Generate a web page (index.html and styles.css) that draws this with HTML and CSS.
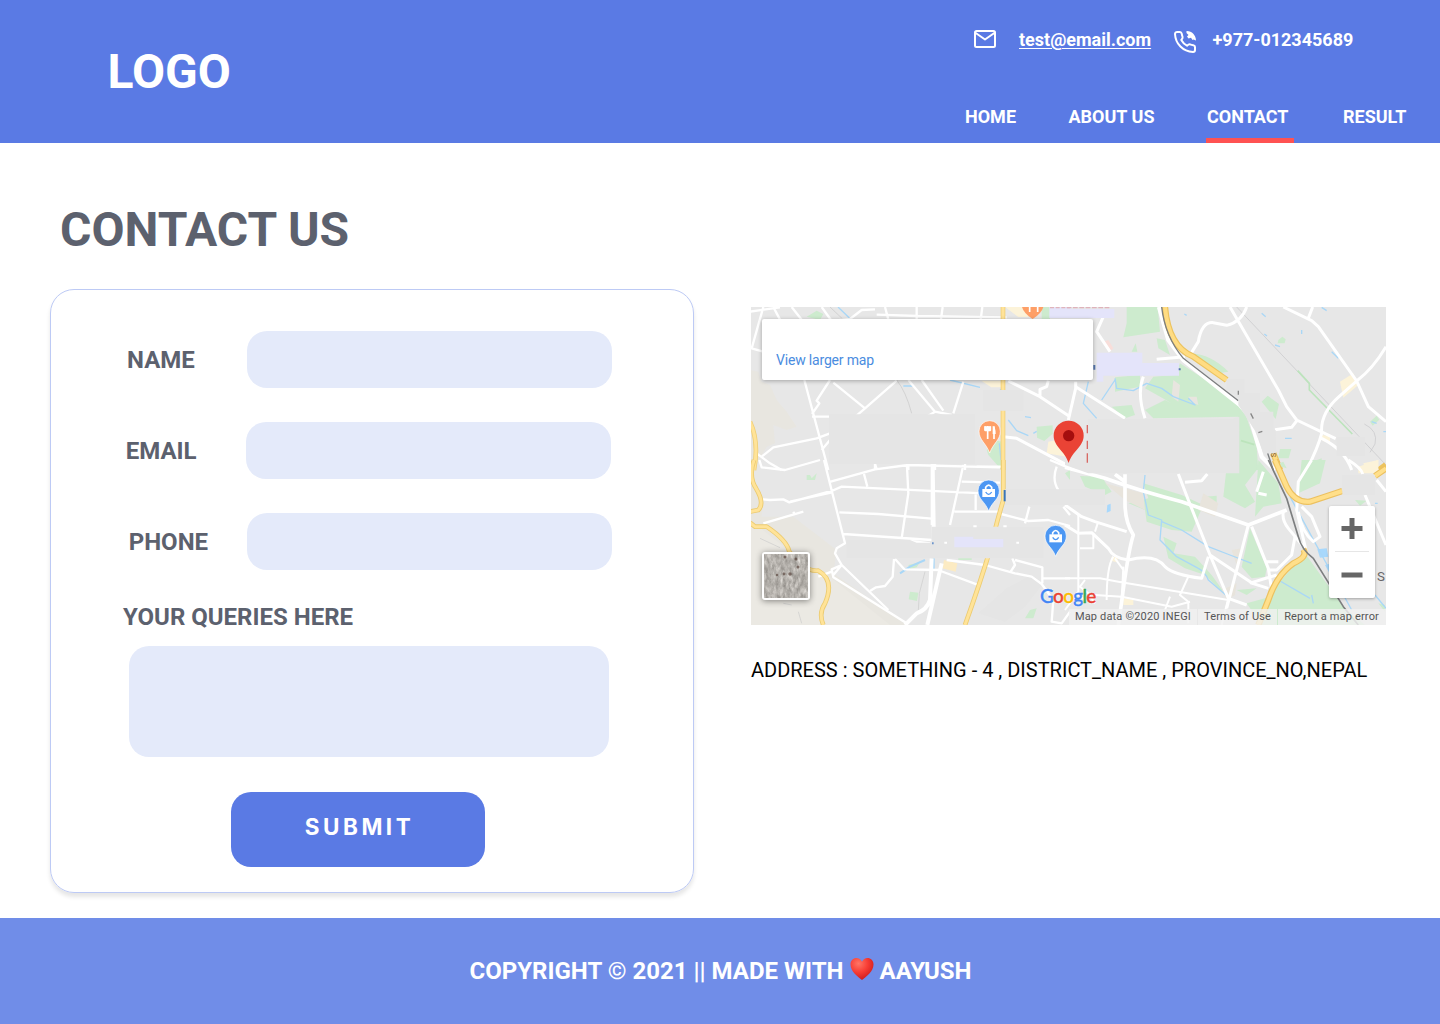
FILE: index.html
```html
<!DOCTYPE html>
<html lang="en">
<head>
<meta charset="utf-8">
<title>Contact Us</title>
<link rel="stylesheet" href="styles.css">
</head>
<body>
<header class="header">
  <div class="logo">LOGO</div>
  <div class="header-side">
    <div class="contact-bar">
      <svg class="mail-icon" width="24" height="20" viewBox="0 0 24 20" fill="none" stroke="#fff" stroke-width="2" stroke-linejoin="round"><rect x="2" y="2" width="20" height="16" rx="1.5"/><path d="M2 3.5l10 7 10-7"/></svg>
      <a class="mail" href="mailto:test@email.com">test@email.com</a>
      <svg class="phone-icon" width="24" height="24" viewBox="0 0 24 24"><path d="M2 4C2 2.700 3 2 4.200 2H7C8 2 8.500 2.700 8.700 3.700C8.900 5 9.200 6 9.600 7C9.900 8 9.600 8.500 8.300 10C9.600 12.400 11.600 14.400 14 15.700C15.500 14.400 16 14.100 17 14.400C18 14.800 19 15.100 20.300 15.300C21.300 15.500 22 16 22 17V20C22 21.300 21.300 22 20 22C10 21.500 2.500 14 2 4Z" fill="none" stroke="#fff" stroke-width="2" stroke-linejoin="round"/><path d="M13.500 1C18.500.700 23 5 23 10.500L20.500 9.500L19.500 10L18 7.800L15.500 8.500L14 6.500L15.500 5L13.500 3Z" fill="#fff"/></svg>
      <span>+977-012345689</span>
    </div>
    <nav class="nav">
      <a href="#">HOME</a>
      <a href="#">ABOUT US</a>
      <a href="#" class="active">CONTACT</a>
      <a href="#">RESULT</a>
    </nav>
  </div>
</header>

<main class="main">
  <h1 class="title">CONTACT US</h1>
  <div class="columns">
    <form class="card">
      <div class="field"><label class="label-name" for="name">NAME</label><input id="name" type="text"></div>
      <div class="field field-email"><label class="label-email" for="email">EMAIL</label><input id="email" type="email"></div>
      <div class="field"><label class="label-phone" for="phone">PHONE</label><input id="phone" type="tel"></div>
      <label class="label-query" for="query">YOUR QUERIES HERE</label>
      <textarea id="query"></textarea>
      <button type="button">SUBMIT</button>
    </form>

    <section class="location">
      <div class="map">
        <svg class="map-art" viewBox="0 0 1905 954" fill="none" stroke-linejoin="round">
          <rect width="1905" height="954" fill="#e7e7e7"/>
          <!-- north-west -->
          <g transform="translate(-3 -21)">
            <path d="M0 210L25 215 35 245 60 255 80 300 110 335 140 380 110 390 70 375 75 430 50 440 0 530Z" fill="#e8e6e0"/>
            <path d="M170 50L200 32 220 42 210 60ZM875 21h25v36h-25ZM860 380l48-4v25l-25 22-22-10ZM710 450l25-30 20 5v85l-40-45Z" fill="#cdebce"/>
            <path d="M765 21h70v30h-30ZM694 242h70v20h-40ZM895 425l25-5 30 50-60-10Z" fill="#fcf3d9"/>
            <path d="M264 21l35 34M600 240l90 22M460 258h28M745 275l10-8M775 360l25 32 35 15M825 350l18 3M748 430l5 50M850 400l10-6" stroke="#a9d7f7" stroke-width="4"/>
            <path d="M240 21l38 36M440 240q28 35 45 100" stroke="#c7c7c7" stroke-width="2"/>
            <g stroke="#fff" stroke-width="7">
              <path d="M40 21L5 145 40 155M0 35L90 22M70 21l20 38M125 21l30 38M215 21l30 42L300 57 335 30 375 28M405 21l10 38M500 21v36M500 48L770 52M578 21l-5 36M697 21l-5 38M380 44l120 4"/>
              <path d="M163 240L235 510M240 240l-40 62 8 8-22 32M250 248L345 325 440 242M345 325l-35 30M186 350H240M215 450l35-42M20 460L60 490 95 510M35 470L70 442 200 415 240 400"/>
              <path d="M475 240L555 335 605 345M515 240l65 92M640 245L610 340M555 335l-30 18M375 490v20M475 490v20M555 490v20M645 490v20M680 500h75"/>
              <path d="M775 243L870 290 960 350M870 290V268L890 260 895 242M760 410L800 415 960 500" stroke-width="9"/>
            </g>
            <path d="M759 21V510M0 365Q28 425 12 510" stroke="#f0cf78" stroke-width="14"/><path d="M759 21V510M0 365Q28 425 12 510" stroke="#ffe398" stroke-width="9"/>
            <path d="M237 343H675V490H237ZM700 270H820V332H700Z" fill="#e5e5e5"/>
            <path d="M898 21h65v33h-65Z" fill="#e4e4fa"/><path d="M900 22h60" stroke="#e0b4bc" stroke-width="5" stroke-dasharray="12 5"/>
          </g>
          <!-- north-east -->
          <g transform="translate(942 -21)">
            <path d="M185 21H278L285 95 175 112 185 70ZM200 155l12-25 5 25ZM275 115l25 5 15 45-35-20ZM380 160Q440 165 490 215L460 220ZM150 232L225 225 225 260 150 275ZM265 230L330 225 345 190 530 310 575 440 580 510H520V350L265 355 240 330 300 300 320 310 240 265ZM590 305l18-18 34 25-10 45ZM640 120l12-10 10 8-3 12H638ZM140 320l60-5 10 30-30 10ZM915 365l20-18 8 12-20 18ZM645 447h34l-8 28h-32ZM730 490l40-15v35h-50ZM0 225h20v15H0Z" fill="#cdebce"/>
            <path d="M825 245l40-25 15 35-45 38ZM770 405l25 3v20l-22-5ZM895 490l45-10v30h-40Z" fill="#fcf3d9"/><path d="M115 125l15-5 15 25-10 10Z" fill="#f8deda"/><path d="M325 240l20 15-5 50-20-15M370 290h25l5 25-25-10Z" fill="#e8e5df"/>
            <path d="M150 235L155 265 205 272 245 250 290 265 325 290 390 315 370 295M150 240L110 300M70 245L55 310 95 355M358 42l7 4M590 40l12 10M598 102l8 6M710 90v12M630 135l15 5M800 155l20 20M660 415h20M770 22l15 10M920 365l15 5M955 395h8" stroke="#a9d7f7" stroke-width="4"/>
            <path d="M515 21L963 495M898 372q42 20 32 60l-15 25" stroke="#c6c6c8" stroke-width="2"/><path d="M698 212L733 250V270L862 402M528 422l40 12" stroke="#bce4bc" stroke-width="5"/>
            <g stroke="#fff" stroke-width="9">
              <path d="M282 21L310 120 355 180 525 315 555 350 590 470 630 510" stroke-width="13"/>
              <path d="M380 157L400 125Q410 65 445 68L485 76Q530 65 545 21M495 21L640 270 665 320 695 360 812 416M630 389L680 382 697 360M655 21L740 62 760 80 875 243 910 320 963 365M743 21L730 55M963 140Q925 205 875 243L822 290Q765 340 770 400 760 440 725 510M770 415Q840 450 860 510M275 178L360 170M115 50L95 95 135 155M32 245V265L10 360M32 260L180 355M235 230Q215 280 240 355M0 492L25 510"/>
            </g>
            <path d="M300 21Q310 140 385 170L485 240M625 460L645 510M963 495l-20 15" stroke="#ecc35f" stroke-width="19"/><path d="M300 21Q310 140 385 170L485 240M625 460L645 510" stroke="#ffdc82" stroke-width="12"/>
            <path d="M290 21Q300 110 355 175L520 302M608 460L625 510" stroke="#7c7e7f" stroke-width="4"/>
            <path d="M70 357H500L523 350V510H70ZM485 236H538V280H585V335H625V390H632V460H595L570 392 520 315V290L485 270ZM815 410h85v58h-85Z" fill="#e5e5e5"/>
            <path d="M0 27H148V54H0ZM95 158H232V189H342V227H115V245H95Z" fill="#e4e4fa"/>
            <path d="M5 22h130" stroke="#dfb2bb" stroke-width="5" stroke-dasharray="14 5"/><path d="M88 195v14M344 205v6" stroke="#5675ad" stroke-width="6"/><path d="M67 375v25M67 422v25M67 460v28" stroke="#d76964" stroke-width="4"/><path d="M557 340l8 16M580 398l12-4M520 272v12" stroke="#888" stroke-width="4"/>
            <text x="617" y="472" transform="rotate(-90 625 464)" font-family="Roboto" font-size="23" fill="#755533">S</text>
          </g>
          <!-- south-west -->
          <g transform="translate(-3 459)">
            <path d="M0 40L40 115 35 170 130 170 260 270 250 340 470 495H0Z" fill="#e8e6e0"/>
            <path d="M120 275L145 300 245 355 420 495H0V180Z" fill="#ebe9e3"/>
            <path d="M170 45h10l5 10 15-15-5 20H170ZM480 395l25 3-4 25-25-5ZM475 315l35-8-10 15-20 5ZM825 475l15-25 20-5-10 30ZM625 290h40v10h-40ZM945 40l15-10v30Z" fill="#cdebce"/><path d="M582 300l40 10-5 25-40-10Z" fill="#fcebc3"/><path d="M770 385l75-40 35 25-55 70-60 45-80-25Z" fill="#e5e5e5"/>
            <path d="M450 340L480 320 525 300M551 295v33" stroke="#a9d7f7" stroke-width="6"/><path d="M525 335L508 400 505 450M30 235l60 28M100 430l25 5M145 455l10 35" stroke="#ccc" stroke-width="2"/>
            <g stroke="#fff" stroke-width="7">
              <path d="M222 0L285 250 260 265 255 280 275 315 415 450M28 0L35 22 105 30 210 0M38 118L60 120 100 118 118 127 245 93 275 80 700 100M40 190L160 155M130 155l5 10M120 125L243 98M242 65L375 28 475 15 750 22M375 12l5 15M342 42l10 38M470 0L475 100 455 235M268 157L385 162 545 176M280 222L545 240M640 15L600 195M635 65L750 68M677 100v50M613 155H750M480 243L540 250M550 240v10"/>
              <path d="M548 0V195M548 20L552 260M545 295L540 420Q530 450 500 460L465 495M575 310L532 495" stroke-width="12"/>
              <path d="M275 315L245 328 250 352 470 490M275 315L250 345M432 297L428 350 405 378 378 382 360 393M435 297L463 328 572 330M572 333L688 376M590 300L705 315 795 340 845 350 875 372 910 420 905 485 935 490 960 455M787 295L795 315 782 335M795 300L877 322V370M877 355H960M205 350l40-15" />
              <path d="M753 162L835 183 895 180 960 198M838 140L825 190M920 20Q905 60 925 90M900 0l60 25M940 140l20 25"/>
            </g>
            <path d="M760 0V120Q745 170 735 210L720 270Q690 370 645 495M12 0Q-5 50 18 85 45 130 25 150L0 155M0 188L15 200H50Q110 240 118 275L145 310Q180 335 205 332 255 360 225 430 205 460 220 495" stroke="#eccb70" stroke-width="14"/><path d="M760 0V120Q745 170 735 210L720 270Q690 370 645 495M12 0Q-5 50 18 85 45 130 25 150L0 155M0 188L15 200H50Q110 240 118 275L145 310Q180 335 205 332 255 360 225 430 205 460 220 495" stroke="#ffe398" stroke-width="9"/>
            <path d="M237 0H675V12H237ZM290 240L480 240 500 248H545V200H880V295H290ZM765 88H1065V135H765Z" fill="#e5e5e5"/><path d="M613 230H670V237H760V262H613Z" fill="#e4e4fa"/><path d="M764 90v34" stroke="#3975b8" stroke-width="6"/><path d="M546 250h5" stroke="#6c95cc" stroke-width="6"/><path d="M583 248h8M799 248h8M670 199h10M760 199h10" stroke="#fff" stroke-width="6"/>
          </g>
          <!-- south-east -->
          <g transform="translate(942 459)">
            <path d="M45 48L110 50 140 95 120 105 60 80ZM235 70L350 105 415 135 380 215 320 210 245 185 240 150 190 130 250 115ZM485 20L510 0H575V30L540 75 570 125 540 145 475 110ZM580 0L640 70 650 130 595 140 570 170ZM710 0H782L765 70 700 100ZM420 110l35-3v25l-25 12ZM555 205L605 325 600 350 560 355 530 320ZM295 230l40 20-10 30 65 10 50 55 50 70-70-70-60-20-50-30ZM545 430L600 415 720 280 835 440 900 495H590ZM515 390l60-5-30 20ZM630 15l25-10 10 20ZM870 120l35 2-20 15ZM940 430l20 5v20Z" fill="#cdebce"/>
            <path d="M120 70L235 100 240 150 180 120ZM415 100L460 130 450 170 400 150ZM500 270l30-5-15 50ZM470 390l45-20-5 35-25 15Z" fill="#e8e4dc"/>
            <path d="M140 290l20 2-5 15-17-5ZM175 415l30 5v15h-30ZM880 20L940 0V40H880Z" fill="#fcf3d9"/><path d="M757 268l28-3 5 25-25 3ZM780 315l12-3v25ZM127 135l10-4v22l-12 5Z" fill="#a8d8fc"/>
            <path d="M240 45L235 95 250 165 290 180 285 240 335 290 400 325Q420 335 430 360L500 420M290 185L350 210 430 260 495 285 560 310M640 360l95 55M740 405l5 25M930 130h8M675 110L860 450M930 405l33 40" stroke="#a9d7f7" stroke-width="4"/>
            <g stroke="#fff" stroke-width="9">
              <path d="M0 22L120 55Q230 95 350 125L550 195 665 150M150 43L180 65M180 43V130Q180 185 205 225 190 270 170 425L160 495" stroke-width="11"/>
              <path d="M340 42L370 120 435 285 490 415 545 435M360 67L410 62 427 42M0 135L50 170 90 185 185 215M0 195L40 220 80 218 130 265Q145 295 190 300 270 280 300 320 325 345 410 355L430 290M435 285L560 368 635 345M550 195L485 445M560 200L610 325 620 390M555 368L610 385M610 330H635L680 285 690 230M605 305h35" />
              <path d="M40 165V395L0 450M45 265H85V220M90 215L98 190M0 355H105L160 365 490 420M145 290Q125 320 125 420M150 295L175 330M175 320L170 425M370 350L345 405 370 425V490M60 360L45 380 70 400L90 430M90 405L170 410 320 440 375 425M315 410L300 450M35 400L60 420M490 415L470 495" stroke-width="6"/>
              <path d="M740 0L700 65 695 150 725 280M655 155Q650 180 670 205L715 260M700 155Q710 215 745 245L765 230 740 170 710 140M850 0Q890 25 893 42M900 105L963 255M935 60L963 95M580 100L605 105M595 35L575 95"/>
            </g>
            <path d="M630 0L665 80Q690 130 735 125L832 93M715 268Q730 290 685 310 635 345 610 420L580 495M930 48L963 25" stroke="#ecc160" stroke-width="19"/><path d="M630 0L665 80Q690 130 735 125L832 93M715 268Q730 290 685 310 635 345 610 420L580 495M930 48L963 25" stroke="#ffdf8a" stroke-width="12"/>
            <path d="M610 0L665 115 700 230Q710 270 745 295L835 440 880 495" stroke="#7c7e7f" stroke-width="5"/>
            <path d="M70 0H523V40H70L0 15V0ZM0 88H120V135H0ZM832 45H930V105H832Z" fill="#e5e5e5"/><path d="M67 0v8" stroke="#d76964" stroke-width="4"/>
            <text x="936" y="363" font-family="Roboto" font-size="40" fill="#666">S</text>
          </g>
          <!-- place pins -->
          <g fill="#fe9f67"><path d="M813 0q5 19 32 36q27-17 32-36Z"/><path d="M716 341a32 32 0 0 1 32 32c0 26-21 35-32 65c-11-30-32-39-32-65a32 32 0 0 1 32-32Z" stroke="#fff" stroke-width="2"/></g>
          <path d="M836 0v15M860 0v15M702 358v12h16v-12M710 357v39M729 358v38" stroke="#fff" stroke-width="5"/>
          <path d="M701 358h18v12h-18ZM725 357q9 2 9 24h-9Z" fill="#fff"/>
          <g id="shop"><path d="M713 519a32 32 0 0 1 32 32c0 26-21 32-32 61c-11-29-32-35-32-61a32 32 0 0 1 32-32Z" fill="#4c97f3" stroke="#fff" stroke-width="2"/><path d="M694 546h38v24h-38Z" fill="#fff"/><path d="M704 547v-6q9-13 18 0v6" stroke="#fff" stroke-width="5"/><path d="M704 555q9 14 18 0" stroke="#4c97f3" stroke-width="4"/></g>
          <use href="#shop" x="201" y="136"/>
          <path d="M953 341a45 45 0 0 1 45 45c0 32-34 46-45 82c-11-36-45-50-45-82a45 45 0 0 1 45-45Z" fill="#ea4335"/><circle cx="953" cy="386" r="17" fill="#a50e0e"/>
        </svg>
        <div class="map-card"><a href="#">View larger map</a></div>
        <svg class="satellite" viewBox="0 0 48 48"><defs><filter id="terrain" x="0" y="0" width="100%" height="100%" color-interpolation-filters="sRGB"><feTurbulence type="fractalNoise" baseFrequency=".28 .14" numOctaves="4" seed="7"/><feColorMatrix values=".38 .2 0 0 .42 .38 .2 0 0 .405 .38 .2 0 0 .385 0 0 0 0 1"/></filter></defs><rect width="48" height="48" rx="3" fill="#fff"/><rect x="2.500" y="2.500" width="43" height="43" filter="url(#terrain)"/><g fill="#4a332b" opacity=".6"><circle cx="23" cy="5" r="1.500"/><circle cx="34" cy="7" r="1.500"/><circle cx="36" cy="15" r="1.500"/><circle cx="28" cy="22" r="1.800"/><circle cx="22" cy="22" r="1.400"/><circle cx="15" cy="23" r="1.200"/></g></svg>
        <div class="google"><span class="g-blue">G</span><span class="g-red">o</span><span class="g-yellow">o</span><span class="g-blue">g</span><span class="g-green">l</span><span class="g-red">e</span></div>
        <div class="zoom-box">
          <svg width="46" height="92" viewBox="0 0 46 92" stroke="#666" stroke-width="5"><path d="M12.500 22.500h21M23 12v21M12.500 69h21"/><path d="M6 45.500h34" stroke="#e6e6e6" stroke-width="1"/></svg>
        </div>
        <div class="attribution"><span>Map data ©2020 INEGI</span><span>Terms of Use</span><span>Report a map error</span></div>
      </div>
      <p class="address">ADDRESS : SOMETHING - 4 , DISTRICT_NAME , PROVINCE_NO,NEPAL</p>
    </section>
  </div>
</main>

<footer class="footer">
  <span>COPYRIGHT © 2021 || MADE WITH</span>
  <svg class="heart" width="24" height="24" viewBox="0 0 24 24"><defs><radialGradient id="heart-fill" cx=".35" cy=".25" r=".8"><stop offset="0" stop-color="#ff7666"/><stop offset=".5" stop-color="#f73d35"/><stop offset="1" stop-color="#c9171a"/></radialGradient></defs><path d="M12 23C8 20 .5 14.500.5 7.500C.5 3.500 3.300 1 6.500 1C9 1 11 2.300 12 4.800C13 2.300 15 1 17.500 1C20.700 1 23.500 3.500 23.500 7.500C23.500 14.500 16 20 12 23Z" fill="url(#heart-fill)"/></svg>
  <span>AAYUSH</span>
</footer>
</body>
</html>
```

FILE: styles.css
```css
* { box-sizing: border-box; }
body { margin: 0; width: 1440px; height: 1024px; display: flex; flex-direction: column; background: #fff; font-family: Roboto, "Liberation Sans", sans-serif; overflow: hidden; }
a { color: inherit; text-decoration: none; }

.header { height: 143px; display: flex; justify-content: space-between; background: #5a7ae4; color: #fff; font-size: 18px; font-weight: 700; line-height: 22px; white-space: nowrap; }
.logo { padding: 44px 0 0 107.500px; font-size: 48px; line-height: 56px; }
.header-side { width: 475px; display: flex; flex-direction: column; justify-content: space-between; padding-top: 29px; }
.contact-bar { display: flex; align-items: flex-start; padding-left: 8px; }
.mail-icon { margin-right: 22px; }
.mail { width: 132px; text-decoration: underline; text-decoration-thickness: 1px; text-underline-offset: 2px; }
.phone-icon { margin: 1px 15.500px 0 22px; }
.nav { display: grid; grid-template-columns: 103.500px 137.500px 136px 98px; height: 37px; }
.nav a { justify-self: start; }
.nav .active { width: 88px; height: 37px; border-bottom: 5px solid #ff5252; padding-left: 1px; }
.nav a:last-child { padding-left: 1px; }

.main { flex: 1; padding: 59px 54px 0 50px; }
.title { margin: 0 0 31px 10px; color: #5c616e; font-size: 48px; font-weight: 700; line-height: 56px; }
.columns { display: flex; align-items: flex-start; gap: 57px; }
.card { width: 644px; height: 604px; display: flex; flex-direction: column; align-items: flex-start; padding: 41px 0 0 72px; border: 1px solid #bdcaf5; border-radius: 24px; box-shadow: 0 4px 4px rgba(0, 0, 0, .1); color: #5c616e; font-size: 24px; font-weight: 700; line-height: 28px; }
.field { width: 488.500px; height: 57px; display: flex; justify-content: space-between; align-items: center; margin-bottom: 34px; }
.field-email { width: 488px; }
.field input, .card textarea { border: 0; background: #e4eafa; border-radius: 20px; outline: 0; }
.field input { width: 365px; height: 57px; padding: 0 20px; }
.label-name { padding-left: 4px; }
.label-email { padding-left: 2.700px; }
.label-phone { padding-left: 5.700px; }
.label-query { margin-top: -1px; }
.card textarea { display: block; width: 480px; height: 111px; margin: 15px 0 35px 6px; resize: none; }
.card button { width: 254px; height: 75px; margin-left: 108px; padding: 0 1px 7px 4px; border: 0; border-radius: 20px; background: #5a7ae4; color: #fff; font: 700 22.500px Inter, sans-serif; letter-spacing: 3.500px; }

.location { padding-top: 18px; }
.map { position: relative; width: 635px; height: 318px; overflow: hidden; color: #555; }
.map-art { display: block; width: 635px; height: 318px; }
.map-card { position: absolute; left: 11px; top: 12px; width: 331px; height: 61px; padding: 33px 14px 0; background: #fff; border-radius: 2px; box-shadow: 0 1px 4px rgba(0, 0, 0, .3); color: #4a8ce0; font-size: 14px; line-height: 17px; letter-spacing: -.18px; }
.satellite { position: absolute; left: 11px; top: 245px; width: 48px; height: 48px; filter: drop-shadow(0 1px 3px rgba(0, 0, 0, .45)); }
.google { position: absolute; left: 289px; top: 277px; font: 500 19px/24px Lato, sans-serif; letter-spacing: -.7px; -webkit-text-stroke: .4px; text-shadow: 0 0 2px #fff; }
.g-blue { color: #4285f4; }
.g-red { color: #ea4335; }
.g-yellow { color: #fbbc05; }
.g-green { color: #34a853; }
.zoom-box { position: absolute; left: 578px; top: 199px; width: 46px; height: 92px; background: #fff; border-radius: 2px; box-shadow: 0 1px 3px rgba(0, 0, 0, .3); }
.attribution { position: absolute; right: 0; bottom: 0; height: 16px; display: flex; gap: 1px; font-size: 11px; line-height: 16px; letter-spacing: .17px; white-space: nowrap; }
.attribution span { padding: 0 6px; background: rgba(240, 240, 240, .82); }
.attribution span:last-child { padding-right: 7px; }
.address { margin: 33px 0 0; font-size: 20px; line-height: 24px; white-space: nowrap; color: #000; }

.footer { height: 106px; display: flex; justify-content: center; gap: 6px; padding: 39px 0 0 1px; background: #708de8; color: #fff; font-size: 24px; line-height: 28px; font-weight: 700; }
```
